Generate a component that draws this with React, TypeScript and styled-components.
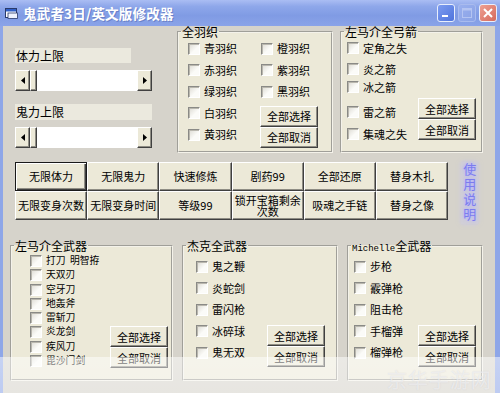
import React from 'react';
import styled, { createGlobalStyle } from 'styled-components';

const Global = createGlobalStyle`
  html, body { margin: 0; padding: 0; background: #fff; }
  body { font-family: "Noto Sans CJK SC", "DejaVu Sans", sans-serif; font-size: 11px; color: #000; }
  * { box-sizing: border-box; }
`;

const Window = styled.div`
  position: relative;
  width: 500px;
  height: 393px;
  overflow: hidden;
  background: #8ea6e8;
  display: flex;
  flex-direction: column;
`;

const TitleBar = styled.div`
  height: 26px;
  flex: none;
  display: flex;
  align-items: center;
  padding: 0 3px 0 5px;
  background: linear-gradient(#aabdf3 0%, #8ea7ea 25%, #809be4 60%, #8aa3e8 100%);
`;

const TitleText = styled.div`
  margin-left: 5px;
  color: #fff;
  font-size: 13.5px;
  font-weight: bold;
  letter-spacing: 0.2px;
  text-shadow: 1px 1px 0 #6b82c8;
  flex: 1;
`;

const CaptionButton = styled.div<{ $kind: 'min' | 'max' | 'close' }>`
  width: 18px;
  height: 18px;
  margin-left: 3px;
  border-radius: 3px;
  border: 1px solid ${p => (p.$kind === 'max' ? '#a9bbee' : '#e8eefc')};
  background: ${p =>
    p.$kind === 'close'
      ? 'linear-gradient(135deg,#eea092,#d66a5c)'
      : p.$kind === 'max'
      ? 'linear-gradient(135deg,#9ab0ee,#8aa2e6)'
      : 'linear-gradient(135deg,#7d9cf0,#4f74dc)'};
  display: flex;
  align-items: center;
  justify-content: center;
`;

const Client = styled.div`
  flex: 1;
  margin: 0 5px 0 3px;
  background: #d6d3cb;
  display: flex;
  flex-direction: column;
`;

const TopRow = styled.div`
  display: flex;
  align-items: flex-start;
`;

const LeftCol = styled.div`
  margin-left: 12px;
  margin-top: 22px;
  width: 137px;
  display: flex;
  flex-direction: column;
`;

const LimitLabel = styled.div<{ $w: number; $mt: number; $h: number }>`
  width: ${p => p.$w}px;
  height: ${p => p.$h}px;
  margin-top: ${p => p.$mt}px;
  background: #ebe9de;
  font-size: 12px;
  line-height: ${p => p.$h}px;
  padding-left: 1px;
`;

const ScrollBar = styled.div`
  margin-top: 7px;
  height: 21px;
  width: 137px;
  display: flex;
  background: #fff;
`;

const raised = `
  background: #ece9d8;
  border-top: 1px solid #fff;
  border-left: 1px solid #fff;
  border-right: 1px solid #404040;
  border-bottom: 1px solid #404040;
  box-shadow: inset -1px -1px 0 #8f8d84;
`;

const ScrollArrow = styled.div`
  ${raised}
  width: 15px;
  height: 21px;
  display: flex;
  align-items: center;
  justify-content: center;
`;

const ScrollThumb = styled.div`
  ${raised}
  width: 7px;
  height: 21px;
`;

const ScrollTrack = styled.div`
  flex: 1;
  background: #fff;
`;

const Group = styled.fieldset<{ $w: number; $h: number; $ml: number }>`
  margin: 0 0 0 ${p => p.$ml}px;
  padding: 0;
  min-width: 0;
  width: ${p => p.$w}px;
  height: ${p => p.$h}px;
  border: 2px groove #f4f2ea;
  background: #ece9d8;
`;

const Legend = styled.legend`
  margin-left: 2px;
  padding: 0 1px;
  font-size: 12px;
  line-height: 12px;
  height: 12px;
`;

const MonoPart = styled.span`
  font-family: "Liberation Mono", monospace;
  font-size: 9px;
`;

const GroupBody = styled.div<{ $pl: number; $pt?: number; $cols: string }>`
  display: grid;
  grid-template-columns: ${p => p.$cols};
  padding-left: ${p => p.$pl}px;
  padding-top: ${p => p.$pt ?? 0}px;
  align-items: start;
`;

const Column = styled.div<{ $mt?: number; $ml?: number }>`
  display: flex;
  flex-direction: column;
  margin-top: ${p => p.$mt ?? 0}px;
  margin-left: ${p => p.$ml ?? 0}px;
`;

const CheckRow = styled.label<{ $h: number; $mt?: number; $fs?: number }>`
  display: flex;
  align-items: center;
  height: ${p => p.$h}px;
  margin-top: ${p => p.$mt ?? 0}px;
  gap: 4px;
  font-size: ${p => p.$fs ?? 11}px;
  white-space: pre;
`;

const CheckText = styled.span`
  display: block;
  line-height: 1;
`;

const Box = styled.span`
  width: 12px;
  height: 12px;
  flex: none;
  background: linear-gradient(135deg, #dcdad2, #fbfbf8 60%);
  border-top: 1px solid #8a8a86;
  border-left: 1px solid #8a8a86;
  border-right: 1px solid #fff;
  border-bottom: 1px solid #fff;
  box-shadow: inset 1px 1px 0 #b9b7ae;
`;

const SmallButton = styled.div`
  ${raised}
  width: 58px;
  height: 21px;
  display: flex;
  align-items: center;
  justify-content: center;
  font-size: 11px;
`;

const MiddleRow = styled.div`
  display: flex;
  margin-top: 9px;
  margin-left: 12px;
  align-items: flex-start;
`;

const ActionGrid = styled.div`
  display: grid;
  grid-template-columns: repeat(6, 72.2px);
  grid-auto-rows: 29px;
`;

const ActionButton = styled.div<{ $focus?: boolean }>`
  ${raised}
  ${p => (p.$focus ? 'border: 1px solid #1a1a1a; box-shadow: inset 1px 1px 0 #fff, inset -1px -1px 0 #404040, inset -2px -2px 0 #8f8d84;' : '')}
  display: flex;
  align-items: center;
  justify-content: center;
  text-align: center;
  font-size: 11px;
  line-height: 11px;
  padding: 0 2px;
`;

const HelpLabel = styled.div`
  margin-left: 13px;
  width: 17px;
  height: 62px;
  writing-mode: vertical-rl;
  text-orientation: upright;
  display: flex;
  align-items: center;
  justify-content: center;
  font-size: 13px;
  letter-spacing: 2px;
  line-height: 17px;
  color: #7c7cee;
  text-shadow: 0 0 2px #b8b8ff, 0 0 4px #a8a8ff;
  background: rgba(200, 200, 245, 0.3);
  box-shadow: 0 0 4px rgba(190, 190, 250, 0.55);
`;

const BottomRow = styled.div`
  display: flex;
  margin-top: 16px;
  margin-left: 7px;
  align-items: flex-start;
`;

const Watermark = styled.div`
  position: absolute;
  left: 0;
  top: 357px;
  width: 500px;
  height: 36px;
  background: linear-gradient(rgba(255, 255, 255, 0.5), rgba(255, 255, 255, 0.42));
  display: flex;
  justify-content: flex-end;
  align-items: flex-end;
  padding-right: 8px;
`;

const WatermarkText = styled.div`
  font-size: 20px;
  line-height: 26px;
  color: rgba(255, 255, 255, 0.55);
  text-shadow: 0 0 1px rgba(160, 160, 175, 0.35);
  letter-spacing: 1px;
`;

const LeftArrowIcon = () => (
  <svg width="4" height="7" viewBox="0 0 4 7">
    <path d="M4 0 L0 3.5 L4 7 Z" fill="#000" />
  </svg>
);
const RightArrowIcon = () => (
  <svg width="4" height="7" viewBox="0 0 4 7">
    <path d="M0 0 L4 3.5 L0 7 Z" fill="#000" />
  </svg>
);

const Scroll = () => (
  <ScrollBar>
    <ScrollArrow>
      <LeftArrowIcon />
    </ScrollArrow>
    <ScrollThumb />
    <ScrollTrack />
    <ScrollArrow>
      <RightArrowIcon />
    </ScrollArrow>
  </ScrollBar>
);

const Check = ({ label, h, mt, fs }: { label: string; h: number; mt?: number; fs?: number }) => (
  <CheckRow $h={h} $mt={mt} $fs={fs}>
    <Box />
    <CheckText>{label}</CheckText>
  </CheckRow>
);

const SelectButtons = ({ mt, ml }: { mt: number; ml?: number }) => (
  <Column $mt={mt} $ml={ml}>
    <SmallButton>全部选择</SmallButton>
    <SmallButton>全部取消</SmallButton>
  </Column>
);

const actions = [
  '无限体力',
  '无限鬼力',
  '快速修炼',
  '剧药99',
  '全部还原',
  '替身木扎',
  '无限变身次数',
  '无限变身时间',
  '等级99',
  '锁开宝箱剩余次数',
  '吸魂之手链',
  '替身之像',
];

export default function App() {
  return (
    <>
      <Global />
      <Window>
        <TitleBar>
          <svg width="13" height="12" viewBox="0 0 13 12">
            <rect x="0.5" y="1.5" width="11" height="9" fill="#fff" stroke="#2a3a6a" />
            <rect x="1" y="2" width="10" height="2.5" fill="#2f5fc8" />
            <rect x="3" y="6" width="9.5" height="5.5" fill="#eef2ff" stroke="#2a3a6a" strokeWidth="0.8" />
          </svg>
          <TitleText>鬼武者3日/英文版修改器</TitleText>
          <CaptionButton $kind="min">
            <svg width="10" height="10" viewBox="0 0 10 10">
              <rect x="1" y="7" width="6" height="2" fill="#fff" />
            </svg>
          </CaptionButton>
          <CaptionButton $kind="max">
            <svg width="10" height="10" viewBox="0 0 10 10">
              <rect x="0.5" y="0.5" width="9" height="9" fill="none" stroke="#b4c4f2" />
              <rect x="0.5" y="0.5" width="9" height="2" fill="#b4c4f2" />
            </svg>
          </CaptionButton>
          <CaptionButton $kind="close">
            <svg width="10" height="10" viewBox="0 0 10 10">
              <path d="M1 1 L9 9 M9 1 L1 9" stroke="#fff" strokeWidth="2" />
            </svg>
          </CaptionButton>
        </TitleBar>
        <Client>
          <TopRow>
            <LeftCol>
              <LimitLabel $w={116} $mt={0} $h={15}>体力上限</LimitLabel>
              <Scroll />
              <LimitLabel $w={137} $mt={13} $h={16}>鬼力上限</LimitLabel>
              <Scroll />
            </LeftCol>

            <Group $w={156} $h={127} $ml={25}>
              <Legend>全羽织</Legend>
              <GroupBody $pl={9} $cols="73px 70px">
                <Column>
                  {['青羽织', '赤羽织', '绿羽织', '白羽织', '黄羽织'].map(t => (
                    <Check key={t} label={t} h={21.5} />
                  ))}
                </Column>
                <Column>
                  {['橙羽织', '紫羽织', '黑羽织'].map(t => (
                    <Check key={t} label={t} h={21.5} />
                  ))}
                  <SelectButtons mt={3} ml={-1} />
                </Column>
              </GroupBody>
            </Group>

            <Group $w={143} $h={127} $ml={7}>
              <Legend>左马介全弓箭</Legend>
              <GroupBody $pl={5} $cols="71px 60px">
                <Column>
                  <Check label="定角之失" h={20} />
                  <Check label="炎之箭" h={20} mt={1} />
                  <Check label="冰之箭" h={20} mt={-2} />
                  <Check label="雷之箭" h={20} mt={5} />
                  <Check label="集魂之失" h={20} mt={2} />
                </Column>
                <SelectButtons mt={60} />
              </GroupBody>
            </Group>
          </TopRow>

          <MiddleRow>
            <ActionGrid>
              {actions.map((a, i) => (
                <ActionButton key={a} $focus={i === 0}>
                  {a}
                </ActionButton>
              ))}
            </ActionGrid>
            <HelpLabel>使用说明</HelpLabel>
          </MiddleRow>

          <BottomRow>
            <Group $w={163} $h={141} $ml={0}>
              <Legend>左马介全武器</Legend>
              <GroupBody $pl={18} $pt={2} $cols="80px 60px">
                <Column>
                  {['打刀  明智拵', '天双刃', '空牙刀', '地轰斧', '雷斩刀', '炎龙剑', '疾风刀', '毘沙门剑'].map(t => (
                    <Check key={t} label={t} h={14.25} fs={9.8} />
                  ))}
                </Column>
                <SelectButtons mt={72} />
              </GroupBody>
            </Group>

            <Group $w={156} $h={141} $ml={9}>
              <Legend>杰克全武器</Legend>
              <GroupBody $pl={12} $pt={4} $cols="71px 60px">
                <Column>
                  {['鬼之鞭', '炎蛇剑', '雷闪枪', '冰碎球', '鬼无双'].map(t => (
                    <Check key={t} label={t} h={21.5} />
                  ))}
                </Column>
                <SelectButtons mt={69} />
              </GroupBody>
            </Group>

            <Group $w={136} $h={141} $ml={9}>
              <Legend>
                <MonoPart>Michelle</MonoPart>全武器
              </Legend>
              <GroupBody $pl={5} $pt={4} $cols="64px 60px">
                <Column>
                  {['步枪', '霰弹枪', '阻击枪', '手榴弹', '榴弹枪'].map(t => (
                    <Check key={t} label={t} h={21.5} />
                  ))}
                </Column>
                <SelectButtons mt={69} />
              </GroupBody>
            </Group>
          </BottomRow>
        </Client>
        <Watermark>
          <WatermarkText>京华手游网</WatermarkText>
        </Watermark>
      </Window>
    </>
  );
}
